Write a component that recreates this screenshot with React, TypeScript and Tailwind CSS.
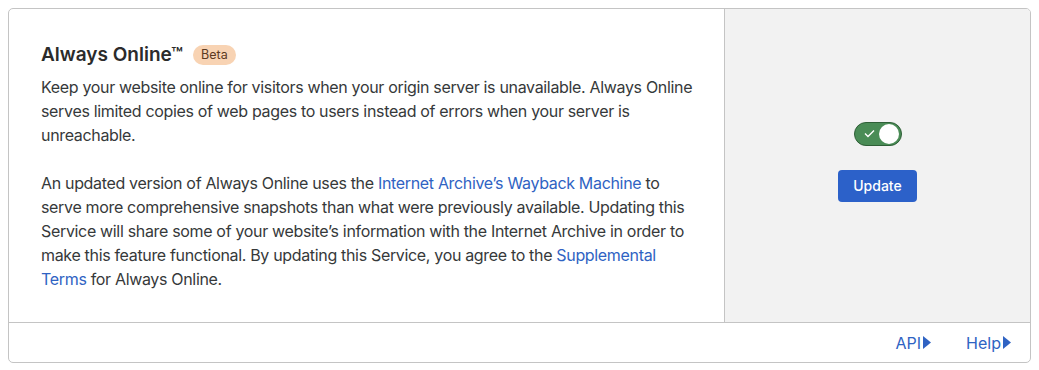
import React from "react";

export default function App() {
  return (
    <div className="w-[1039px] h-[370px] bg-white p-2" style={{ fontFamily: "Inter, 'Noto Sans', sans-serif" }}>
      <div className="flex h-[355px] flex-col overflow-hidden rounded-[5px] border border-[#c4c4c4] text-[#36393a]">
        <div className="flex flex-1">
          <div className="w-[716px] border-r border-[#c4c4c4] pl-8 pr-7 pt-[34px]">
            <div className="flex items-center gap-[10px]">
              <h2 className="text-[19px] font-semibold leading-6 text-[#2b2b2b]">Always Online™</h2>
              <span className="rounded-full bg-[#f8d3b3] px-[8px] text-[12.5px] leading-5 text-[#5b3a22]">Beta</span>
            </div>
            <p className="mt-[8px] text-[16px] leading-6 tracking-[-0.33px]">
              Keep your website online for visitors when your origin server is unavailable. Always Online serves limited
              copies of web pages to users instead of errors when your server is unreachable.
            </p>
            <p className="mt-6 text-[16px] leading-6 tracking-[-0.33px]">
              An updated version of Always Online uses the{" "}
              <a className="text-[#2f63c3]">Internet Archive’s Wayback Machine</a> to serve more comprehensive
              snapshots than what were previously available. Updating this Service will share some of your website’s
              information with the Internet Archive in order to make this feature functional. By updating this Service,
              you agree to the <a className="text-[#2f63c3]">Supplemental Terms</a> for Always Online.
            </p>
          </div>
          <div className="flex flex-1 flex-col items-center justify-center gap-6 bg-[#f2f2f2] pb-2">
            <div className="flex h-[24px] w-[48px] items-center justify-between rounded-full border border-[#2f5f37] bg-[#4a8c56] pl-[9px] pr-[2px]">
              <svg width="11" height="9" viewBox="0 0 11 9" fill="none">
                <path d="M1 4.5 L4 7.5 L10 1.5" stroke="white" strokeWidth="1.4" />
              </svg>
              <div className="h-[20px] w-[20px] rounded-full bg-white" />
            </div>
            <button className="h-[32px] w-[79px] rounded-[4px] bg-[#2c61c9] text-[14px] font-medium text-white">
              Update
            </button>
          </div>
        </div>
        <div className="flex h-[40px] items-center justify-end gap-[35px] border-t border-[#c4c4c4] pr-[19px] text-[16px] text-[#2f63c3]">
          <span className="flex items-center gap-[2px]">
            API
            <svg width="8" height="13" viewBox="0 0 8 13"><path d="M0 0 L8 6.5 L0 13 Z" fill="#2f63c3" /></svg>
          </span>
          <span className="flex items-center gap-[2px]">
            Help
            <svg width="8" height="13" viewBox="0 0 8 13"><path d="M0 0 L8 6.5 L0 13 Z" fill="#2f63c3" /></svg>
          </span>
        </div>
      </div>
    </div>
  );
}
